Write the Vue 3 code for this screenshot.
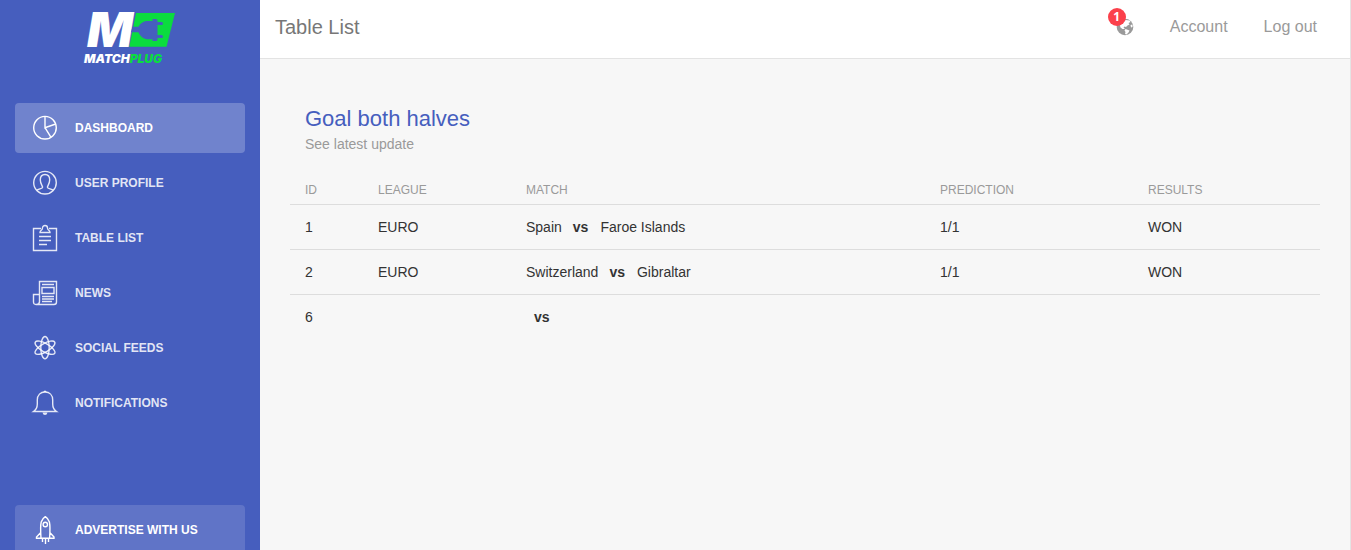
<script setup>
const links = [
  { label: 'Dashboard', icon: 'pie', active: true },
  { label: 'User Profile', icon: 'user' },
  { label: 'Table List', icon: 'clipboard' },
  { label: 'News', icon: 'news' },
  { label: 'Social Feeds', icon: 'atom' },
  { label: 'Notifications', icon: 'bell' },
]

const rows = [
  { id: 1, league: 'EURO', home: 'Spain', away: 'Faroe Islands', prediction: '1/1', result: 'WON' },
  { id: 2, league: 'EURO', home: 'Switzerland', away: 'Gibraltar', prediction: '1/1', result: 'WON' },
  { id: 6, league: '', home: '', away: '', prediction: '', result: '' },
]
</script>

<template>
  <div class="layout">
    <aside class="sidebar">
      <a href="#" class="logo" aria-label="Matchplug">
        <svg width="92" height="54" viewBox="0 0 92 54">
          <path fill="#0bdc3f" d="M52 2H91L82.500 35.700H45.300Z" />
          <text class="logo-m" x="3" y="36">M</text>
          <path fill="#465ebe" d="M48.500 15.800H54.500C56.500 11.800 60 10 64 10H68.500V8H72Q73.500 8 73.500 10V11H77.500Q79 11 79 12.500T77.500 14H73.500V24H77.500Q79 24 79 25.500T77.500 27H73.500V28.500Q73.500 30 72 30H68.500V28.200H64C60 28.200 56.500 26 54.500 21.200H47Z" />
          <text class="logo-word" x="0" y="52">MATCH<tspan fill="#0bdc3f">PLUG</tspan></text>
        </svg>
      </a>

      <nav class="menu">
        <a v-for="l in links" :key="l.label" href="#" class="item" :class="{ active: l.active }">
          <svg class="icon" width="26" height="26" viewBox="0 0 26 26">
            <template v-if="l.icon === 'pie'">
              <circle cx="13" cy="12.700" r="11.300" />
              <path d="M13 1.500V12.700L23.700 9M13 12.700L19 22.300" />
            </template>
            <template v-else-if="l.icon === 'user'">
              <circle cx="13" cy="12.700" r="11.300" />
              <path d="M4.800 20.300C6.500 18.800 10.600 18.700 10.600 17.200C10.600 15.700 8.300 14 8.300 9.800C8.300 6.500 10 4.500 13 4.500S17.700 6.500 17.700 9.800C17.700 14 15.400 15.700 15.400 17.200C15.400 18.700 19.500 18.800 21.200 20.300" />
            </template>
            <template v-else-if="l.icon === 'clipboard'">
              <path d="M9 3.500H1.500V25.500H24.500V3.500H17" />
              <path d="M8 7.500C8 5 10.500 5.500 10.500 3C10.500 1.500 11.500 .5 13 .5S15.500 1.500 15.500 3C15.500 5.500 18 5 18 7.500ZM7 11.500H19M7 15.500H19M7 19.500H15" />
            </template>
            <template v-else-if="l.icon === 'news'">
              <path d="M7.500 22V1.500H24.500V22Q24.500 24.500 22 24.500H4Q1.500 24.500 1.500 22V14.500H7.500M7.500 21.500Q7.500 24.500 4.500 24.500" />
              <path d="M10 4.500H22M10 7.500H22V13.500H10ZM10 16.500H22M10 19H22M10 21.500H20" />
            </template>
            <template v-else-if="l.icon === 'atom'">
              <ellipse cx="13" cy="12.700" rx="4.200" ry="11.200" />
              <ellipse cx="13" cy="12.700" rx="4.200" ry="11.200" transform="rotate(60 13 12.700)" />
              <ellipse cx="13" cy="12.700" rx="4.200" ry="11.200" transform="rotate(120 13 12.700)" />
            </template>
            <template v-else>
              <path d="M1.500 21.500C4.500 19.500 5.300 18 5.300 14V10C5.300 5 8.500 2 13 2S20.700 5 20.700 10V14C20.700 18 21.500 19.500 24.500 21.500Z" />
              <path class="solid" d="M10.500 22.500H15.500Q15 25 13 25T10.500 22.500ZM11.500 2A1.500 1.500 0 0 1 14.500 2Z" />
            </template>
          </svg>
          <span>{{ l.label }}</span>
        </a>
      </nav>

      <a href="#" class="item promo">
        <svg class="icon" width="26" height="26" viewBox="0 0 26 26">
          <path d="M9 21C8.500 14 8.300 9 9.200 5C10 2.500 12 .5 13.300 -.3C14.600 .5 16.600 2.500 17.400 5C18.300 9 18.100 14 17.600 21M8.800 15.500L4.500 20V21.200H22V20L17.800 15.500" />
          <circle cx="13.300" cy="7.500" r="2.200" />
          <path d="M10.500 22V25M13.500 22V27M16.500 22V25" />
        </svg>
        <span>Advertise with us</span>
      </a>
    </aside>

    <div class="main">
      <header class="topbar">
        <a href="#" class="brand">Table List</a>
        <nav class="actions">
          <a href="#" class="globe" aria-label="Notifications">
            <svg width="18" height="18" viewBox="0 0 18 18">
              <circle cx="9" cy="9" r="8.300" fill="#9a9a9a" />
              <path fill="#fff" d="M3.500 6L6 2.500L8 4L9.500 2L13.500 2.500L14.500 4L12.500 5L13.500 6.500L11.500 7.500L10 9L8.500 8.500L7.500 9.500L9 11L6.500 11L4.500 9.500ZM9.500 11L13.500 12.500L12.500 14.500L10.500 16.500L9 16L9.500 14L8.500 12.500ZM14.500 7L16.500 6.500V9L15 9.500Z" />
            </svg>
            <span class="badge">1</span>
          </a>
          <a href="#">Account</a>
          <a href="#">Log out</a>
        </nav>
      </header>

      <main class="content">
        <div class="heading">
          <h4>Goal both halves</h4>
          <p>See latest update</p>
        </div>
        <table>
          <colgroup>
            <col class="c-id" /><col class="c-league" /><col /><col class="c-pred" /><col class="c-res" />
          </colgroup>
          <thead>
            <tr><th>ID</th><th>League</th><th>Match</th><th>Prediction</th><th>Results</th></tr>
          </thead>
          <tbody>
            <tr v-for="r in rows" :key="r.id">
              <td>{{ r.id }}</td>
              <td>{{ r.league }}</td>
              <td>{{ r.home }}<b :class="{ lone: !r.home }">vs</b>{{ r.away }}</td>
              <td>{{ r.prediction }}</td>
              <td>{{ r.result }}</td>
            </tr>
          </tbody>
        </table>
      </main>
    </div>
  </div>
</template>

<style>
body {
  margin: 0;
}
</style>

<style scoped>
* {
  box-sizing: border-box;
}
.layout {
  display: flex;
  height: 100vh;
  font: 14px/20px "Liberation Sans", Arial, sans-serif;
  color: #333;
  background: #f7f7f7;
  border-right: 1px solid #e4e4e4;
}
a {
  text-decoration: none;
  color: inherit;
}
.sidebar {
  flex: 0 0 260px;
  padding: 0 15px;
  background: #465ebe;
  color: #fff;
  overflow: hidden;
}
.logo {
  display: flex;
  justify-content: center;
  padding: 11px 0 38px;
}
.logo svg {
  overflow: visible;
}
.logo-m {
  font: italic 900 48px Inter, sans-serif;
  fill: #fff;
}
.logo-word {
  font: italic 900 12px Inter, sans-serif;
  fill: #fff;
}
.menu {
  display: flex;
  flex-direction: column;
  gap: 5px;
}
.item {
  display: flex;
  align-items: center;
  gap: 17px;
  height: 50px;
  padding: 0 17px;
  border-radius: 4px;
  font-size: 12px;
  font-weight: 700;
  text-transform: uppercase;
  color: rgba(255, 255, 255, 0.86);
}
.item.active {
  color: #fff;
  background: rgba(255, 255, 255, 0.23);
}
.promo {
  margin-top: 77px;
  color: #fff;
  background: rgba(255, 255, 255, 0.14);
}
.icon {
  flex: none;
  overflow: visible;
  fill: none;
  stroke: currentColor;
  stroke-width: 1.4;
}
.icon .solid {
  fill: currentColor;
  stroke: none;
}
.main {
  flex: 1;
  min-width: 0;
}
.topbar {
  display: flex;
  align-items: center;
  justify-content: space-between;
  height: 59px;
  padding: 0 33px 4px 15px;
  background: #fff;
  border-bottom: 1px solid #e3e3e3;
}
.brand {
  font-size: 20px;
  line-height: 30px;
  color: #777;
}
.actions {
  display: flex;
  align-items: center;
  gap: 36px;
  font-size: 16px;
  color: #9a9a9a;
}
.globe {
  position: relative;
  display: flex;
}
.badge {
  position: absolute;
  top: -10px;
  left: -8px;
  width: 18px;
  height: 18px;
  border-radius: 50%;
  background: #fb404b;
  color: #fff;
  font: 700 12px/18px "Open Sans", sans-serif;
  text-align: center;
}
.content {
  padding: 45px 30px 0;
}
.heading {
  padding: 0 15px;
}
h4 {
  margin: 0;
  font-size: 22px;
  line-height: 30px;
  font-weight: 400;
  color: #465ebe;
}
p {
  margin: 0;
  color: #9a9a9a;
}
table {
  width: 100%;
  margin-top: 20px;
  border-collapse: separate;
  border-spacing: 0;
  table-layout: fixed;
}
.c-id {
  width: 80px;
}
.c-league {
  width: 148px;
}
.c-pred {
  width: 208px;
}
.c-res {
  width: 180px;
}
th,
td {
  padding: 12px 8px;
  text-align: left;
  border-bottom: 1px solid #ddd;
}
th:first-child,
td:first-child {
  padding-left: 15px;
}
th {
  padding: 6px 8px 4px;
  font-size: 12px;
  font-weight: 400;
  text-transform: uppercase;
  color: #9a9a9a;
}
tbody tr:last-child td {
  border-bottom: 0;
}
b {
  margin: 0 12px 0 11px;
}
b.lone {
  margin-left: 8px;
}
</style>
